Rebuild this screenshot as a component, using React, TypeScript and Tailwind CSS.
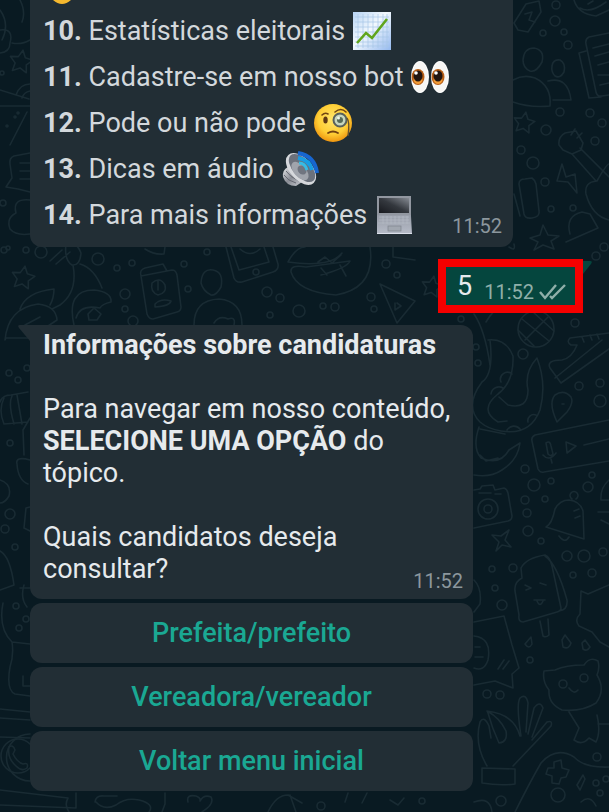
import React from "react";

const dots: [number, number, number][] = [
  [4, 250, 3], [26, 250, 3], [41, 252, 6], [98, 259, 6], [117, 268, 3], [132, 263, 3], [125, 294, 5], [125, 309, 3], [133, 321, 5],
  [184, 264, 3], [188, 289, 3], [207, 252, 3], [256, 272, 3], [267, 292, 5], [280, 298, 4], [299, 311, 6], [270, 315, 3], [323, 306, 3],
  [335, 307, 4], [386, 264, 4], [397, 275, 3], [371, 297, 4], [374, 309, 3], [461, 319, 3], [575, 323, 4],
  [556, 5, 4], [555, 21, 5], [543, 33, 3], [564, 32, 3], [568, 45, 4], [560, 112, 4], [590, 113, 4], [602, 123, 4], [546, 130, 5],
  [521, 150, 4], [533, 163, 6], [595, 141, 4], [545, 182, 4], [551, 209, 3], [573, 208, 3], [604, 247, 4], [596, 256, 4],
  [523, 354, 5], [476, 347, 3], [478, 363, 3], [579, 386, 4], [600, 383, 4], [600, 401, 6], [592, 475, 3], [588, 487, 5],
  [525, 469, 4], [534, 485, 6], [551, 481, 3], [525, 500, 4], [545, 499, 3], [527, 513, 4], [528, 531, 5], [541, 541, 3],
  [567, 556, 5], [584, 556, 6], [603, 552, 4], [492, 569, 3], [513, 568, 4], [495, 588, 3], [502, 605, 5], [592, 573, 4], [573, 575, 3],
  [530, 660, 3], [487, 694, 4], [500, 695, 4], [501, 801, 5], [597, 757, 4], [596, 783, 3], [606, 779, 3], [600, 793, 3],
  [9, 373, 3], [18, 380, 3], [27, 368, 3], [10, 443, 3], [10, 514, 5], [5, 529, 4], [15, 547, 3], [16, 606, 3], [19, 628, 3], [26, 619, 3],
  [2, 73, 2], [3, 203, 3], [8, 248, 2], [321, 806, 4], [422, 801, 3], [15, 117, 1], [7, 126, 1], [18, 113, 1],
];

function Star({ x, y, r }: { x: number; y: number; r: number }) {
  const points = Array.from({ length: 10 }, (_, i) => {
    const a = (i * Math.PI) / 5 - 1.4;
    const d = i % 2 ? r * 0.5 : r;
    return `${(x + d * Math.cos(a)).toFixed(1)},${(y + d * Math.sin(a)).toFixed(1)}`;
  });
  return <polygon points={points.join(" ")} />;
}

function Wallpaper() {
  return (
    <svg
      aria-hidden="true"
      className="absolute inset-0 h-full w-full"
      viewBox="0 0 609 812"
      preserveAspectRatio="xMidYMid slice"
      fill="none"
      stroke="#192b33"
      strokeWidth="1.6"
      strokeLinecap="round"
      strokeLinejoin="round"
    >
      {dots.map(([x, y, r]) => (
        <circle key={`${x}-${y}`} cx={x} cy={y} r={r} />
      ))}
      <Star x={21} y={62} r={12} />
      <Star x={23} y={278} r={12} />
      <Star x={524} y={123} r={11} />
      <Star x={432} y={287} r={11} />
      {/* left edge */}
      <path d="M0 10Q10 24 2 40M0 30Q14 28 10 43Q10 52 0 53M20 0Q26 12 22 22M12 43Q22 45 30 40M0 90L29 99M0 106H30M10 145L27 112M16 95Q20 84 30 84M22 98Q24 92 30 91" />
      <path d="M30 153L14 156Q9 158 10 164L12 178L6 187L18 189L30 192M20 163H30M20 171H30M20 179H30M30 200Q12 198 16 213Q6 218 10 229Q16 236 30 234" />
      <path d="M50 261L62 250M56 264L70 252M66 244Q76 240 81 253Q80 266 72 265Q64 260 66 244ZM80 264Q94 268 102 288M73 265Q78 292 60 305L52 309M20 309Q26 292 54 289Q54 298 50 305M5 340Q8 308 38 304Q56 306 57 320L30 338H6ZM74 325Q66 290 94 290Q112 292 111 302Q102 304 100 308Q80 304 76 318M88 314L94 308L101 314L97 320H89ZM25 325L40 317" />
      <path d="M141 276Q139 270 145 268L163 264L167 271M141 276L172 270Q176 270 177 275L181 307Q181 311 177 312L153 319Q149 319 147 314ZM152 283Q160 276 165 285Q167 293 158 295Q150 292 152 283ZM155 304Q161 298 171 301Q170 306 155 307ZM158 281V290" />
      <path d="M201 283Q202 268 213 270Q224 272 221 287Q216 296 211 295Q203 291 201 283ZM194 325Q194 300 219 299Q242 301 242 325M214 323Q219 315 228 319Q236 316 234 325M145 249Q154 255 164 254L165 247" />
      <path d="M226 247L234 278Q236 283 242 282L273 272Q279 270 278 264L273 247M231 247L239 270L269 262L264 247M240 249Q250 258 260 249M288 262Q296 247 305 247M288 262Q330 268 342 253M291 272Q290 264 306 267L350 261Q347 268 321 275M291 272Q297 292 336 295Q376 288 370 247M318 262L325 257L332 263L341 255M321 268L327 275M340 265L346 276M393 247V257L415 260M380 284L415 301L397 323ZM395 303V310L401 306L397 303" />
      {/* right edge, top */}
      <path d="M514 23L526 4L539 1L541 12L528 32L518 30ZM525 14L532 12L529 20L535 22M574 0Q578 14 596 16L609 10M580 8Q590 14 606 2M588 4L593 1" />
      <path d="M523 60Q524 48 534 48Q545 50 542 62Q536 73 530 71Q523 68 523 60ZM513 80Q524 74 535 78Q552 86 550 106Q530 108 513 102M552 66Q553 59 560 60Q566 63 564 72Q560 79 555 76Q551 72 552 66ZM548 81Q568 76 571 100H553" />
      <path d="M609 33L589 37Q585 39 586 44L596 92Q597 97 602 96L609 95M586 51L579 53L589 98L601 97M593 48L609 44M595 56L609 52M598 65L609 62M598 75H609M600 85L609 83" />
      <path d="M559 145Q558 137 565 133L576 131L583 143L581 150L572 154L563 150ZM572 154L596 181M580 148L609 177M597 181Q584 182 586 194Q592 216 609 220M597 181Q606 165 609 164M571 135L575 129M577 138L582 133" />
      <path d="M562 164L557 181L568 182L577 193L575 174L566 177ZM514 194L520 216M519 184Q519 179 525 179L532 178Q535 180 536 184L539 211Q540 217 532 218Q525 219 524 214ZM570 234Q565 216 582 212L590 214L598 228L566 242M530 238L540 235L543 225L548 235L559 236L551 241L554 249L543 245L534 250L538 242ZM509 247Q516 252 514 244" />
      {/* right side, below the reply */}
      <circle cx="536" cy="329" r="18" />
      <path d="M522 319L549 341M518 330L534 346M525 340L548 317M533 312L554 331M474 314Q485 330 490 365M486 322Q493 310 506 300" />
      <path d="M488 340Q506 338 513 356Q514 382 498 394Q478 410 498 422L507 421M490 340Q494 374 482 382Q464 406 480 422Q488 429 501 431Q530 436 540 410Q547 384 537 358Q524 372 528 390Q528 410 508 405L499 397M501 382A7 7 0 0 1 512 374M491 394A8 8 0 0 1 503 388M507 430A8 8 0 0 1 520 429M528 422A6 6 0 0 1 536 415" />
      <path d="M479 427Q472 448 481 458Q500 466 509 450L520 443Q518 460 502 470Q490 478 474 475M480 429L505 434M480 455L486 461L498 458" />
      <path d="M609 333L570 338Q566 342 571 345L577 345Q572 358 562 360Q546 360 550 368L561 383L609 349M555 378L602 340M582 337L584 342M590 335L592 340M597 334L599 339M557 422Q548 403 555 395Q564 389 571 397Q574 403 567 412ZM562 404H564" />
      <path d="M609 420L535 435Q531 437 532 441L538 469Q540 473 544 472L609 461M566 442L576 446L567 453ZM584 445L609 439M546 443Q550 440 551 446L553 454Q551 457 548 454ZM543 455Q549 462 556 453M551 459L552 463" />
      <path d="M474 490L480 489L482 486L493 485L495 490L504 488Q507 489 508 493L512 516Q512 520 508 521L474 528M479 493H491M495 494H501" />
      <circle cx="488" cy="509" r="10" />
      <circle cx="488" cy="509" r="4" />
      <path d="M546 527Q552 524 555 509Q560 500 569 500Q580 501 583 511L584 539ZM559 536Q565 544 569 537M572 499A4 4 0 1 1 576 499M574 511L579 509M575 518L580 516M609 480Q600 488 601 500H609M598 512H609M601 520L609 524M492 535L501 536L509 530L505 540L511 547L502 545L496 551L499 542Z" />
      <path d="M515 591Q514 582 522 578L521 568Q526 558 545 555Q550 557 552 566L561 608Q561 611 557 612L523 622Q518 622 519 615ZM545 556Q557 564 567 600Q568 610 559 611M540 621L543 636Q546 638 549 635L548 619M525 585L531 588L526 590M540 583L546 585M534 600H545M537 601Q540 608 543 601M474 580Q482 588 480 604L474 612" />
      <path d="M474 622L504 616L512 645L519 668L512 674L513 688L495 681L474 685M525 644L531 637L532 644Q529 650 525 644ZM562 640L565 635L571 643Q569 650 563 647ZM582 643L585 640L590 647Q587 652 583 649ZM498 669L504 660M503 669L509 661M474 636Q492 638 488 660Q484 672 474 668M475 647H480M475 657H483" />
      <path d="M609 585L588 594L581 591L580 614Q574 620 579 626L592 632L600 642L609 647M544 671L555 670Q566 665 584 665Q590 656 598 661Q600 668 597 675Q606 690 596 703Q582 712 562 710Q548 704 549 690Q542 681 544 671ZM569 688Q574 695 578 690M569 712L579 728L574 740Q582 746 589 738L596 742Q601 732 597 715M598 724H609" />
      <circle cx="563" cy="684" r="4" />
      <circle cx="584" cy="678" r="4" />
      <path d="M487 711Q514 714 520 736M488 713Q492 728 499 743Q508 742 506 731Q500 718 487 711ZM487 766Q474 744 480 722Q484 715 489 726L491 738M521 736Q516 704 520 698Q526 693 528 703L526 732M528 734L534 708Q540 700 543 708L532 737M532 740L547 722Q553 720 551 726L513 766M482 768L515 769V784Q500 786 482 783ZM515 812Q530 782 541 763Q556 746 574 757Q584 768 609 767" />
      <path d="M554 762L561 760L562 768L569 770L566 777L561 778L559 784L552 783L552 776L546 774L548 768L554 768ZM577 785L583 775L585 779L580 790Z" />
      <circle cx="558" cy="795" r="7" />
      <path d="M581 802Q590 794 596 806M474 802Q490 796 492 812" />
      {/* left side, beside the menu */}
      <path d="M0 402Q2 395 11 395L28 392M4 424Q-2 410 4 398M14 424Q8 404 12 396M22 424L17 395M4 424L28 422M30 418L23 430L24 455M17 464Q15 456 30 460M17 464Q18 480 28 484M0 480Q12 484 9 496Q5 503 0 503M30 507L26 508L24 528L30 531M0 551Q10 556 14 585L0 590M20 588H30" />
      <path d="M3 603Q-2 628 12 642L30 644M12 642Q14 655 10 667Q6 690 15 694L30 696M24 585Q20 598 27 607M23 676V686H30M0 709L30 712M0 718L30 720M0 737L30 738M0 790L68 798Q64 805 69 812M0 805L76 808V793M30 734A22 22 0 1 0 30 781" />
      <circle cx="18" cy="756" r="17" />
      <path d="M9 747Q13 744 15 750L13 754Q17 762 23 764Q29 762 27 768Q22 772 16 766Q7 758 9 747Z" />
      <path d="M95 802Q96 795 104 796H117M96 802Q104 811 116 805Q126 797 139 800Q155 804 149 812M165 793V804L162 812M188 802Q186 794 196 796Q201 798 200 801Q204 794 211 797Q215 804 202 812M268 812Q276 795 288 795L302 803M290 795L296 812M345 802L348 793M363 801L367 793L362 803M390 800L398 805L404 798" />
    </svg>
  );
}

function ChartEmoji() {
  return (
    <svg className="size-[38px]" viewBox="0 0 38 38" role="img" aria-label="gráfico">
      <defs>
        <linearGradient id="paper" x1="0" y1="0" x2="1" y2="1">
          <stop stopColor="#b6d3f4" />
          <stop offset=".45" stopColor="#f3f9fe" />
          <stop offset="1" stopColor="#94b9ef" />
        </linearGradient>
      </defs>
      <rect width="38" height="38" fill="url(#paper)" />
      <path d="M5 2v34M10 2v34M15 2v34M20 2v34M25 2v34M30 2v34M34 2v34M2 5h34M2 10h34M2 15h34M2 20h34M2 25h34M2 30h34M2 34h34" stroke="#a8c5e6" strokeWidth=".7" />
      <path d="M4 31L13 21L19 26L34 7" fill="none" stroke="#60a51c" strokeWidth="2.6" />
    </svg>
  );
}

function EyesEmoji() {
  return (
    <svg className="size-[38px]" viewBox="0 0 38 38" role="img" aria-label="olhos">
      {[0, 20].map((x) => (
        <g key={x}>
          <ellipse cx={x + 9} cy="19" rx="9" ry="16" fill="#fff" />
          <ellipse cx={x + 9} cy="19" rx="8" ry="15" fill="#f7f6f4" />
          <ellipse cx={x + 7} cy="19" rx="6.5" ry="8" fill="#b75d14" />
          <ellipse cx={x + 7} cy="22" rx="4.5" ry="4" fill="#f19a35" />
          <ellipse cx={x + 7} cy="18" rx="4.5" ry="5.5" fill="#211510" />
          <circle cx={x + 5} cy="15" r="1.8" fill="#fff" />
        </g>
      ))}
    </svg>
  );
}

function MonocleEmoji() {
  return (
    <svg className="size-[38px]" viewBox="0 0 38 38" role="img" aria-label="rosto com monóculo">
      <defs>
        <radialGradient id="face" cx=".5" cy=".4" r=".6">
          <stop stopColor="#ffe66b" />
          <stop offset=".65" stopColor="#ffce35" />
          <stop offset="1" stopColor="#ee950f" />
        </radialGradient>
      </defs>
      <circle cx="19" cy="19" r="19" fill="url(#face)" />
      <path d="M8 11Q11 8 14 10M21 8Q27 3 32 8" fill="none" stroke="#714512" strokeWidth="1.6" strokeLinecap="round" />
      <ellipse cx="11.5" cy="16" rx="2.2" ry="3.5" fill="#5f3813" />
      <circle cx="26" cy="16" r="6.5" fill="#c6d6bd" stroke="#59615b" strokeWidth="2" />
      <circle cx="26" cy="16" r="3" fill="#566a57" />
      <circle cx="24.5" cy="14" r="1.5" fill="#f0f7eb" />
      <path d="M33 14Q36 18 34 32" fill="none" stroke="#69532b" strokeWidth="1.4" />
      <path d="M14 29Q19 26 24 29" fill="none" stroke="#714010" strokeWidth="1.8" strokeLinecap="round" />
    </svg>
  );
}

function SpeakerEmoji() {
  return (
    <svg className="size-[38px]" viewBox="0 0 38 38" role="img" aria-label="alto-falante">
      <defs>
        <linearGradient id="metal" x1="0" y1="0" x2="1" y2="1">
          <stop stopColor="#e7e9eb" />
          <stop offset=".5" stopColor="#898c94" />
          <stop offset="1" stopColor="#c8cbd1" />
        </linearGradient>
      </defs>
      <path d="M6 17Q0 20 1 27Q4 36 14 36L20 32Z" fill="url(#metal)" />
      <path d="M2 25Q6 31 14 33M4 21Q8 27 17 31" fill="none" stroke="#656871" strokeWidth="1" />
      <ellipse cx="19" cy="19" rx="19" ry="11" transform="rotate(48 19 19)" fill="#d6d8dc" />
      <ellipse cx="20" cy="18" rx="17" ry="9" transform="rotate(48 20 18)" fill="#6b717c" />
      <ellipse cx="18" cy="21" rx="11" ry="6" transform="rotate(48 18 21)" fill="#a0a4ac" />
      <ellipse cx="20" cy="20" rx="5" ry="4" transform="rotate(48 20 20)" fill="#707580" />
      <g fill="none" strokeWidth="4">
        <path d="M16 3Q33 6 35 23" stroke="#1766d0" />
        <path d="M16 8Q28 10 30 20" stroke="#189de4" />
        <path d="M17 13Q23 13 25 20" stroke="#35bce6" strokeWidth="3" />
      </g>
    </svg>
  );
}

function LaptopEmoji() {
  return (
    <svg className="size-[38px]" viewBox="0 0 38 38" role="img" aria-label="computador">
      <defs>
        <linearGradient id="screen" x1="0" y1="1" x2="1" y2="0">
          <stop stopColor="#17191e" />
          <stop offset=".5" stopColor="#34383e" />
          <stop offset="1" stopColor="#858a92" />
        </linearGradient>
        <linearGradient id="keys" x1="0" y1="0" x2="0" y2="1">
          <stop stopColor="#777d87" />
          <stop offset="1" stopColor="#b7bcc8" />
        </linearGradient>
      </defs>
      <path d="M2 0H36V20L37 38H2Z" fill="url(#keys)" />
      <path d="M2 0H36V19H2Z" fill="#9297a0" />
      <path d="M4 2H34V17H4Z" fill="url(#screen)" />
      <path d="M4 21H34M4 24H34M3 27H35M8 20V28M12 20V28M16 20V28M20 20V28M24 20V28M28 20V28M32 20V28" stroke="#b4bac4" strokeWidth=".7" />
      <rect x="13" y="30" width="13" height="5" fill="#a1a7b0" stroke="#7d838d" strokeWidth=".7" />
      <path d="M2 37.5H37" stroke="#dce0ea" />
    </svg>
  );
}

const topics = [
  { n: 10, label: "Estatísticas eleitorais", icon: <ChartEmoji /> },
  { n: 11, label: "Cadastre-se em nosso bot", icon: <EyesEmoji /> },
  { n: 12, label: "Pode ou não pode", icon: <MonocleEmoji /> },
  { n: 13, label: "Dicas em áudio", icon: <SpeakerEmoji /> },
  { n: 14, label: "Para mais informações", icon: <LaptopEmoji /> },
];

const options = ["Prefeita/prefeito", "Vereadora/vereador", "Voltar menu inicial"];

function Time() {
  return <time className="text-xl leading-6 text-[#8c979d]">11:52</time>;
}

export default function App() {
  return (
    <main className="relative min-h-screen overflow-hidden bg-[#091a22] font-['Roboto','Noto_Sans',sans-serif] text-[27px] leading-8 text-[#e6eaed]">
      <Wallpaper />
      <div className="relative flex flex-col pl-[30px]">
        <article className="mr-24 rounded-b-xl bg-[#222e35] pr-[11px] pb-[9px] pl-[13px] text-[#d3d8dc]">
          <div className="flex h-2 items-end overflow-hidden pb-1 pl-2">
            <svg className="h-1 w-[22px]" viewBox="0 0 22 4" aria-hidden="true">
              <path d="M2 0Q11 8 20 0Z" fill="#f5b82e" />
            </svg>
          </div>
          <div className="flex items-end justify-between">
            <ul>
              {topics.map((t) => (
                <li key={t.n} className="flex h-[46px] items-center gap-2 whitespace-nowrap">
                  <span>
                    <b>{t.n}.</b> {t.label}
                  </span>
                  {t.icon}
                </li>
              ))}
            </ul>
            <Time />
          </div>
        </article>

        <article className="relative mt-3 mr-[26px] flex h-[54px] items-center gap-3 self-end border-8 border-[#f50000] bg-[#05463e] pr-2 pl-[11px]">
          <span>5</span>
          <span className="flex items-center gap-1 pt-3 text-[#8fafa9]">
            <time className="text-xl leading-6">11:52</time>
            <svg className="h-5 w-[29px]" viewBox="0 0 29 20" fill="none" stroke="currentColor" strokeWidth="2.4" role="img" aria-label="Entregue">
              <path d="M2 10L7 16L18 3M12 14L14 16L27 3" />
            </svg>
          </span>
          <svg className="absolute -top-2 -right-[17px] h-4 w-[9px]" viewBox="0 0 9 16" aria-hidden="true">
            <path d="M0 2H7Q10 2 8 5L0 15Z" fill="#05463e" />
          </svg>
        </article>

        <section className="mt-3 mr-[136px] flex flex-col gap-1">
          <article className="relative rounded-xl rounded-tl-none bg-[#222e35] px-[13px] pt-1 pb-[14px]">
            <svg className="absolute top-0 -left-3 h-4 w-3" viewBox="0 0 12 16" aria-hidden="true">
              <path d="M12 0H2Q-1 0 1 3L12 16Z" fill="#222e35" />
            </svg>
            <h2 className="font-bold">Informações sobre candidaturas</h2>
            <p className="mt-8">
              Para navegar em nosso conteúdo, <b>SELECIONE UMA OPÇÃO</b> do tópico.
            </p>
            <p className="mt-8 pr-20">Quais candidatos deseja consultar?</p>
            <span className="absolute right-[10px] bottom-[6px] flex">
              <Time />
            </span>
          </article>
          {options.map((o) => (
            <button key={o} type="button" className="h-[60px] rounded-xl bg-[#222e35] font-medium text-[#1aa893]">
              {o}
            </button>
          ))}
        </section>
      </div>
    </main>
  );
}
